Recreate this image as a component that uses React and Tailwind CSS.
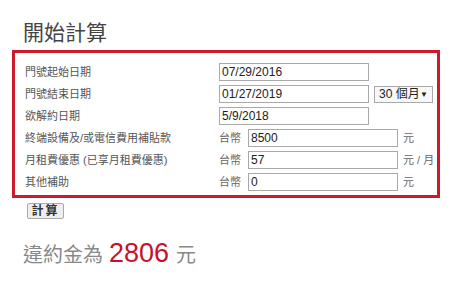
const font = { fontFamily: '"Liberation Sans", "Noto Sans CJK TC", sans-serif' }

const rows = [
  { label: '門號起始日期', value: '07/29/2016' },
  { label: '門號結束日期', value: '01/27/2019', select: '30 個月' },
  { label: '欲解約日期', value: '5/9/2018' },
  { label: '終端設備及/或電信費用補貼款', value: '8500', money: true, unit: '元' },
  { label: '月租費優惠 (已享月租費優惠)', value: '57', money: true, unit: '元 / 月' },
  { label: '其他補助', value: '0', money: true, unit: '元' },
]

function Field({ value }) {
  return (
    <div className="w-[150px] h-[18px] border border-[#a9a9a9] bg-white px-[2px] text-[12px] leading-[16px] text-[#222]">
      {value}
    </div>
  )
}

export default function App() {
  return (
    <div className="w-[450px] h-[283px] bg-white pl-[12px] pt-[21px] text-[#333]" style={font}>
      <h1 className="ml-[11px] text-[21px] leading-[24px] text-[#444]">開始計算</h1>

      <div className="mt-[5px] w-[428px] border-[3px] border-[#cc1a2c] pl-[10px] pt-[8px] pb-[2px]">
        {rows.map((r) => (
          <div key={r.label} className="flex items-center h-[22px]">
            <div className="w-[194px] text-[11px] text-[#555]">{r.label}</div>
            {r.money ? (
              <>
                <div className="w-[29px] text-[11px] text-[#666]">台幣</div>
                <Field value={r.value} />
                <div className="ml-[5px] text-[11px] text-[#666]">{r.unit}</div>
              </>
            ) : (
              <>
                <Field value={r.value} />
                {r.select && (
                  <div className="ml-[5px] w-[59px] h-[17px] border border-[#a9a9a9] bg-[#f8f8f8] flex items-center justify-between px-[4px] text-[12px] leading-[15px] text-[#222]">
                    <span>{r.select}</span>
                    <span className="text-[8px]">▼</span>
                  </div>
                )}
              </>
            )}
          </div>
        ))}
      </div>

      <button className="block mt-[5px] ml-[15px] w-[37px] h-[16px] border border-[#aaa] bg-[#eee] rounded-[2px] text-[12px] leading-[14px] font-bold tracking-[2px] text-[#333]">
        計算
      </button>

      <div className="mt-[20px] ml-[11px] flex items-baseline text-[20px] leading-[28px] text-[#888]">
        <span>違約金為</span>
        <span className="ml-[6px] text-[27px] text-[#c8102e]">2806</span>
        <span className="ml-[7px]">元</span>
      </div>
    </div>
  )
}
